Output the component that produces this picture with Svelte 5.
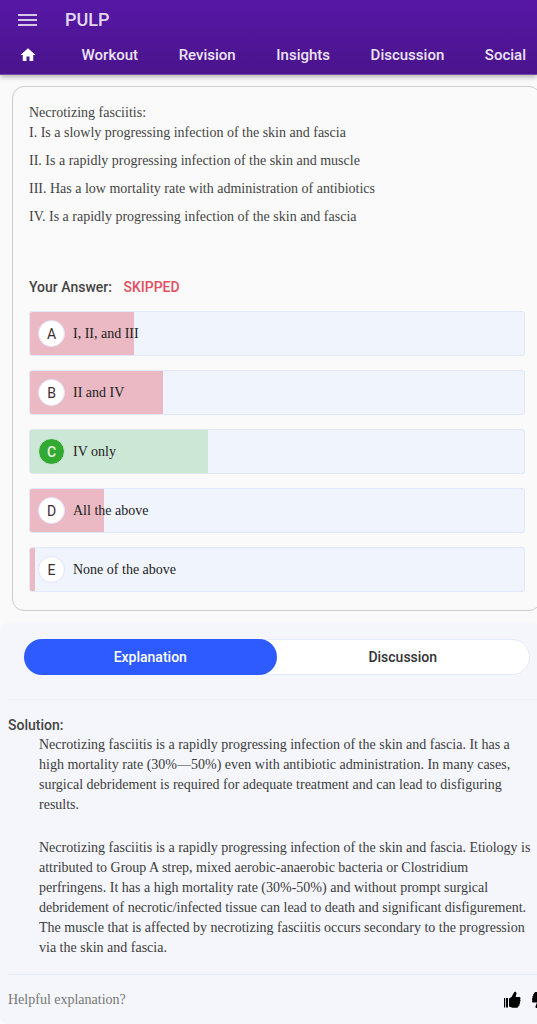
<script>
  const nav = ['Workout', 'Revision', 'Insights', 'Discussion', 'Social'];
  const statements = [
    'I. Is a slowly progressing infection of the skin and fascia',
    'II. Is a rapidly progressing infection of the skin and muscle',
    'III. Has a low mortality rate with administration of antibiotics',
    'IV. Is a rapidly progressing infection of the skin and fascia'
  ];
  const options = [
    { key: 'A', text: 'I, II, and III', share: 21 },
    { key: 'B', text: 'II and IV', share: 27 },
    { key: 'C', text: 'IV only', share: 36, correct: true },
    { key: 'D', text: 'All the above', share: 15 },
    { key: 'E', text: 'None of the above', share: 1 }
  ];
  const solution = [
    [
      'Necrotizing fasciitis is a rapidly progressing infection of the skin and fascia. It has a',
      'high mortality rate (30%—50%) even with antibiotic administration. In many cases,',
      'surgical debridement is required for adequate treatment and can lead to disfiguring',
      'results.'
    ],
    [
      'Necrotizing fasciitis is a rapidly progressing infection of the skin and fascia. Etiology is',
      'attributed to Group A strep, mixed aerobic-anaerobic bacteria or Clostridium',
      'perfringens. It has a high mortality rate (30%-50%) and without prompt surgical',
      'debridement of necrotic/infected tissue can lead to death and significant disfigurement.',
      'The muscle that is affected by necrotizing fasciitis occurs secondary to the progression',
      'via the skin and fascia.'
    ]
  ];
  let tab = $state('Explanation');
</script>

<div class="page">
  <header>
    <div class="bar">
      <button class="menu" aria-label="Menu">
        <svg width="20" height="14" viewBox="0 0 20 14"><path d="M0 2h19M0 7h19M0 12h19" stroke="currentColor" stroke-width="2" /></svg>
      </button>
      <span class="brand">PULP</span>
    </div>
    <nav>
      <a class="home" href="#home" aria-label="Home">
        <svg width="18" height="18" viewBox="0 0 24 24"><path d="M10 20v-6h4v6h5v-8h3L12 3 2 12h3v8z" fill="currentColor" /></svg>
      </a>
      {#each nav as item}
        <a href={'#' + item.toLowerCase()}>{item}</a>
      {/each}
    </nav>
  </header>

  <main>
    <section class="card">
      <div class="question">
        <p class="stem">Necrotizing fasciitis:</p>
        {#each statements as s}
          <p>{s}</p>
        {/each}
      </div>
      <p class="answer">Your Answer: <strong>SKIPPED</strong></p>
      <div class="options">
        {#each options as o}
          <button class="option" class:correct={o.correct}>
            <span class="fill" style:width={o.share + '%'}></span>
            <span class="letter">{o.key}</span>
            <span class="label">{o.text}</span>
          </button>
        {/each}
      </div>
    </section>

    <section class="details">
      <div class="tabs">
        {#each ['Explanation', 'Discussion'] as name}
          <button class:active={tab === name} onclick={() => (tab = name)}>{name}</button>
        {/each}
      </div>
      <article>
        <h2>Solution:</h2>
        {#each solution as para}
          <p>{#each para as line}<span>{line}</span>{/each}</p>
        {/each}
      </article>
      <footer>
        <span>Helpful explanation?</span>
        <div class="votes">
          <button aria-label="Helpful">
            <svg width="18" height="18" viewBox="0 0 18 18"><path d="M1 7h1.2v9.5H1zM3 7h2v9.5H3zM6 7.5 8.5 6 11 1.5C11.6.2 13.6.6 13.5 2.5L12.7 6H16c1.5 0 2 1.5 1 2.3.8.8.7 1.9-.2 2.4.6.8.4 1.9-.4 2.4.3 1-.2 1.9-1.1 2.1-.2 1-.8 1.5-2 1.5H9.5L6 15.5z" /></svg>
          </button>
          <button aria-label="Not helpful">
            <svg width="18" height="18" viewBox="0 0 18 18"><path d="M17 11h-1.2V1.500H17zM15 11h-2V1.500h2zM12 10.500 10 12l-3.500 4.500c-.8 1-2.300.4-2-1.200L6 11.500H2.500C1 11.500.6 10 1.500 9.200.7 8.400.9 7.300 1.700 6.800 1.200 6 1.500 5 2.200 4.500 2 3.400 2.400 2.700 3.200 2.500 3.400 1.400 4 1 5 1h4l3 1z" /></svg>
          </button>
        </div>
      </footer>
    </section>
  </main>
</div>

<style>
  :global(body) {
    margin: 0;
    background: #fafafa;
  }
  .page {
    overflow: hidden;
    font: 14px/20px Roboto, sans-serif;
    color: #444;
  }
  p, h2 {
    margin: 0;
  }
  button {
    font: inherit;
    color: inherit;
    border: 0;
    padding: 0;
    background: none;
    cursor: pointer;
  }
  svg {
    display: block;
  }
  header {
    position: relative;
    box-sizing: border-box;
    height: 75px;
    background: linear-gradient(#5717a5, #4a148c);
    border-bottom: 1px solid #7650a6;
    box-shadow: 0 2px 5px rgba(0, 0, 0, 0.3);
    color: #ece4f5;
  }
  .bar {
    display: flex;
    align-items: center;
    gap: 27px;
    height: 39px;
    padding-left: 18px;
  }
  .menu {
    color: #d5c6e8;
  }
  .brand {
    font-size: 18px;
    font-weight: 500;
    color: #e3d8f0;
  }
  nav {
    display: flex;
    align-items: center;
    justify-content: space-between;
    height: 32px;
    padding: 0 11px 0 19px;
  }
  nav a {
    font-size: 15px;
    font-weight: 500;
    color: inherit;
    text-decoration: none;
  }
  .home {
    color: #fff;
    margin-right: 4px;
  }
  main {
    margin-right: -4px;
    padding-top: 11px;
  }
  .card {
    margin-left: 12px;
    padding: 16px 15px 18px 16px;
    border: 1px solid #ccc;
    border-radius: 12px;
  }
  .question {
    display: flex;
    flex-direction: column;
    gap: 8px;
    font-family: "Liberation Serif", serif;
    white-space: nowrap;
  }
  .stem {
    margin-bottom: -8px;
  }
  .answer {
    margin: 50px 0 14px;
    font-weight: 500;
  }
  .answer strong {
    margin-left: 8px;
    font-weight: 500;
    color: #e04f63;
  }
  .options {
    display: flex;
    flex-direction: column;
    gap: 14px;
  }
  .option {
    position: relative;
    display: flex;
    align-items: center;
    gap: 8px;
    height: 45px;
    padding: 0 8px;
    border: 1px solid #e1e8fb;
    border-radius: 3px;
    background: #f0f4fd;
    overflow: hidden;
  }
  .fill {
    position: absolute;
    inset: 0 auto 0 0;
    background: #eab9c4;
  }
  .correct .fill {
    background: #cde7d6;
  }
  .letter {
    position: relative;
    box-sizing: border-box;
    width: 27px;
    height: 27px;
    border: 1px solid #e4e3f8;
    border-radius: 50%;
    background: #fff;
    line-height: 26px;
    color: #3d2c33;
  }
  .correct .letter {
    background: #32aa31;
    border-color: #d7e9e4;
    color: #e3f5e3;
    font-weight: 500;
  }
  .label {
    position: relative;
    font-family: "Liberation Serif", serif;
    color: #222;
  }
  .details {
    margin-top: 12px;
    padding: 16px 0 14px 8px;
    border-radius: 8px;
    background: #f4f6fb;
  }
  .tabs {
    display: flex;
    margin: 0 11px 24px 16px;
    border: 1px solid #e5eafd;
    border-radius: 18px;
    background: #fff;
  }
  .tabs button {
    flex: 1;
    height: 34px;
    border-radius: 18px;
    font-weight: 500;
    color: #333;
  }
  .tabs .active {
    margin: -1px 0 -1px -1px;
    height: 36px;
    background: #2e5bff;
    color: #fff;
  }
  article {
    display: flex;
    flex-direction: column;
    padding: 15px 0 16px;
    border-top: 1px solid #eeeff2;
  }
  h2 {
    font-size: 14px;
    font-weight: 500;
  }
  article p {
    padding-left: 31px;
    margin-bottom: 23px;
    font-family: "Liberation Serif", serif;
    white-space: nowrap;
    color: #3c3c3c;
  }
  article p:last-child {
    margin-bottom: 0;
  }
  article span {
    display: block;
  }
  footer {
    display: flex;
    align-items: center;
    justify-content: space-between;
    margin-right: -8px;
    padding-top: 15px;
    border-top: 1px solid #e3ebfb;
    font-family: "Liberation Serif", serif;
    color: #777;
  }
  .votes {
    display: flex;
    gap: 10px;
    color: #000;
  }
</style>
